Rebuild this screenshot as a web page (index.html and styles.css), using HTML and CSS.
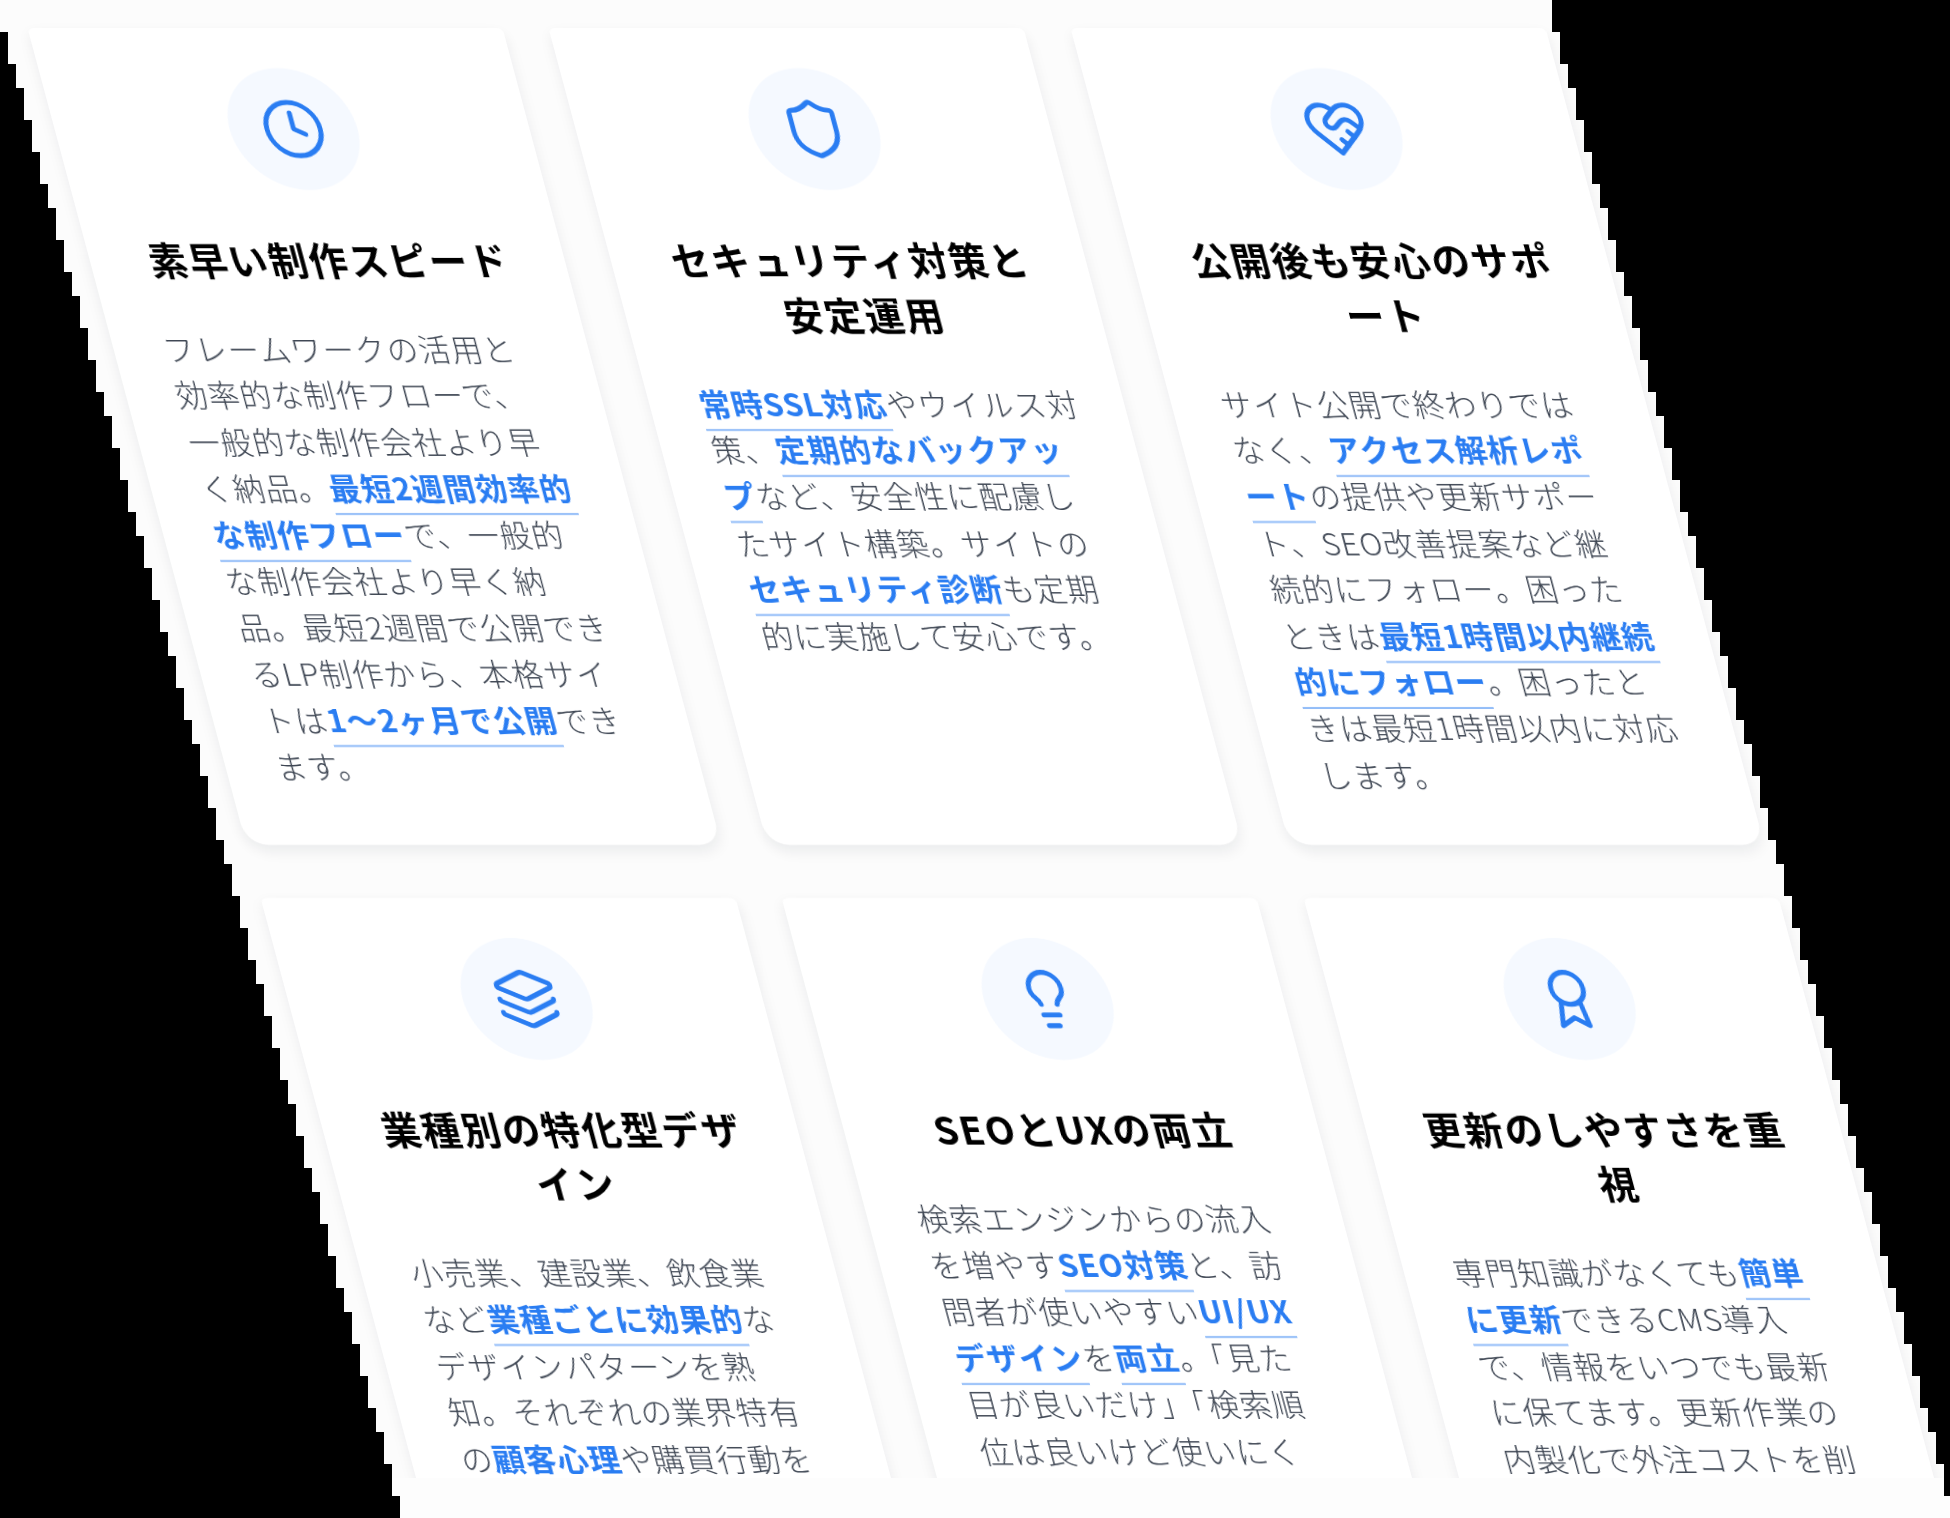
FILE: index.html
```html
<!DOCTYPE html>
<html lang="ja">
<head>
<meta charset="utf-8">
<title>特徴</title>
<link rel="stylesheet" href="styles.css">
</head>
<body>
<main class="stage">
<div class="viewport">
<section class="grid">
<article class="card">
<div class="badge"><svg class="icon" viewBox="0 0 24 24"><circle cx="12" cy="12" r="10"/><path d="M12 6v6l4 2"/></svg></div>
<h3 class="title">素早い制作スピード</h3>
<p class="body">フレームワークの活用と<br>効率的な制作フローで、<br>一般的な制作会社より早<br>く納品。<b class="mark">最短2週間効率的<br>な制作フロー</b>で、一般的<br>な制作会社より早く納<br>品。最短2週間で公開でき<br>るLP制作から、本格サイ<br>トは<b class="mark">1〜2ヶ月で公開</b>でき<br>ます。</p>
</article>
<article class="card">
<div class="badge"><svg class="icon" viewBox="0 0 24 24"><path d="M20 13c0 5-3.5 7.5-7.66 8.95a1 1 0 0 1-.67-.01C7.5 20.5 4 18 4 13V6a1 1 0 0 1 1-1c2 0 4.5-1.2 6.24-2.72a1.17 1.17 0 0 1 1.52 0C14.51 3.81 17 5 19 5a1 1 0 0 1 1 1z"/></svg></div>
<h3 class="title">セキュリティ対策と<br>安定運用</h3>
<p class="body"><b class="mark">常時SSL対応</b>やウイルス対<br>策、<b class="mark">定期的なバックアッ<br>プ</b>など、安全性に配慮し<br>たサイト構築。サイトの<br><b class="mark">セキュリティ診断</b>も定期<br>的に実施して安心です。</p>
</article>
<article class="card">
<div class="badge"><svg class="icon" viewBox="0 0 24 24"><path d="M19 14c1.49-1.46 3-3.21 3-5.5A5.5 5.5 0 0 0 16.5 3c-1.76 0-3 .5-4.5 2-1.5-1.5-2.74-2-4.5-2A5.5 5.5 0 0 0 2 8.5c0 2.3 1.5 4.05 3 5.5l7 7Z"/><path d="M12 5 9.04 7.96a2.17 2.17 0 0 0 0 3.08c.82.82 2.13.85 3 .07l2.07-1.9a2.82 2.82 0 0 1 3.79 0l2.96 2.66"/><path d="m18 15-2-2"/><path d="m15 18-2-2"/></svg></div>
<h3 class="title">公開後も安心のサポ<br>ート</h3>
<p class="body">サイト公開で終わりでは<br>なく、<b class="mark">アクセス解析レポ<br>ート</b>の提供や更新サポー<br>ト、SEO改善提案など継<br>続的にフォロー。困った<br>ときは<b class="mark">最短1時間以内継続<br>的にフォロー</b>。困ったと<br>きは最短1時間以内に対応<br>します。</p>
</article>
<article class="card">
<div class="badge"><svg class="icon" viewBox="0 0 24 24"><path d="M12.83 2.18a2 2 0 0 0-1.66 0L2.6 6.08a1 1 0 0 0 0 1.83l8.58 3.91a2 2 0 0 0 1.66 0l8.58-3.9a1 1 0 0 0 0-1.83z"/><path d="M2 12a1 1 0 0 0 .58.91l8.6 3.91a2 2 0 0 0 1.65 0l8.58-3.9A1 1 0 0 0 22 12"/><path d="M2 17a1 1 0 0 0 .58.91l8.6 3.91a2 2 0 0 0 1.65 0l8.58-3.9A1 1 0 0 0 22 17"/></svg></div>
<h3 class="title">業種別の特化型デザ<br>イン</h3>
<p class="body">小売業、建設業、飲食業<br>など<b class="mark">業種ごとに効果的</b>な<br>デザインパターンを熟<br>知。それぞれの業界特有<br>の<b class="mark">顧客心理</b>や購買行動を</p>
</article>
<article class="card">
<div class="badge"><svg class="icon" viewBox="0 0 24 24"><path d="M15 14c.2-1 .7-1.7 1.5-2.5 1-.9 1.5-2.2 1.5-3.5A6 6 0 0 0 6 8c0 1 .2 2.2 1.5 3.5.7.7 1.3 1.5 1.5 2.5"/><path d="M9 18h6"/><path d="M10 22h4"/></svg></div>
<h3 class="title">SEOとUXの両立</h3>
<p class="body">検索エンジンからの流入<br>を増やす<b class="mark">SEO対策</b>と、訪<br>問者が使いやすい<b class="mark">UI/UX<br>デザイン</b>を<b class="mark">両立</b>。「見た<br>目が良いだけ」「検索順<br>位は良いけど使いにく</p>
</article>
<article class="card">
<div class="badge"><svg class="icon" viewBox="0 0 24 24"><path d="M15.477 12.89 17 22l-5-3-5 3 1.523-9.11"/><circle cx="12" cy="8" r="6"/></svg></div>
<h3 class="title">更新のしやすさを重<br>視</h3>
<p class="body">専門知識がなくても<b class="mark">簡単<br>に更新</b>できるCMS導入<br>で、情報をいつでも最新<br>に保てます。更新作業の<br>内製化で外注コストを削</p>
</article>
</section>
</div>
</main>
</body>
</html>
```
FILE: styles.css
```css
* { box-sizing: border-box; }
html, body { margin: 0; height: 100%; background: #000; }
body { width: 1950px; height: 1518px; overflow: hidden; font-family: "Noto Sans CJK JP", "Noto Sans", sans-serif; }
.stage {
  width: 1950px;
  height: 1518px;
  background: #fdfdfd;
  clip-path: polygon(0 0,0 32px,8px 32px,8px 64px,16px 64px,16px 88px,24px 88px,24px 120px,32px 120px,32px 152px,40px 152px,40px 184px,48px 184px,48px 208px,56px 208px,56px 240px,64px 240px,64px 272px,72px 272px,72px 296px,80px 296px,80px 328px,88px 328px,88px 360px,96px 360px,96px 392px,104px 392px,104px 416px,112px 416px,112px 448px,120px 448px,120px 480px,128px 480px,128px 512px,136px 512px,136px 536px,144px 536px,144px 568px,152px 568px,152px 600px,160px 600px,160px 632px,168px 632px,168px 656px,176px 656px,176px 688px,184px 688px,184px 720px,192px 720px,192px 744px,200px 744px,200px 776px,208px 776px,208px 808px,216px 808px,216px 840px,224px 840px,224px 864px,232px 864px,232px 896px,240px 896px,240px 928px,248px 928px,248px 960px,256px 960px,256px 984px,264px 984px,264px 1016px,272px 1016px,272px 1048px,280px 1048px,280px 1080px,288px 1080px,288px 1104px,296px 1104px,296px 1136px,304px 1136px,304px 1168px,312px 1168px,312px 1192px,320px 1192px,320px 1224px,328px 1224px,328px 1256px,336px 1256px,336px 1288px,344px 1288px,344px 1312px,352px 1312px,352px 1344px,360px 1344px,360px 1376px,368px 1376px,368px 1408px,376px 1408px,376px 1432px,384px 1432px,384px 1464px,392px 1464px,392px 1496px,400px 1496px,400px 1518px,1952px 1518px,1952px 1496px,1944px 1496px,1944px 1464px,1936px 1464px,1936px 1432px,1928px 1432px,1928px 1408px,1920px 1408px,1920px 1376px,1912px 1376px,1912px 1344px,1904px 1344px,1904px 1312px,1896px 1312px,1896px 1288px,1888px 1288px,1888px 1256px,1880px 1256px,1880px 1224px,1872px 1224px,1872px 1192px,1864px 1192px,1864px 1168px,1856px 1168px,1856px 1136px,1848px 1136px,1848px 1104px,1840px 1104px,1840px 1080px,1832px 1080px,1832px 1048px,1824px 1048px,1824px 1016px,1816px 1016px,1816px 984px,1808px 984px,1808px 960px,1800px 960px,1800px 928px,1792px 928px,1792px 896px,1784px 896px,1784px 864px,1776px 864px,1776px 840px,1768px 840px,1768px 808px,1760px 808px,1760px 776px,1752px 776px,1752px 744px,1744px 744px,1744px 720px,1736px 720px,1736px 688px,1728px 688px,1728px 656px,1720px 656px,1720px 632px,1712px 632px,1712px 600px,1704px 600px,1704px 568px,1696px 568px,1696px 536px,1688px 536px,1688px 512px,1680px 512px,1680px 480px,1672px 480px,1672px 448px,1664px 448px,1664px 416px,1656px 416px,1656px 392px,1648px 392px,1648px 360px,1640px 360px,1640px 328px,1632px 328px,1632px 296px,1624px 296px,1624px 272px,1616px 272px,1616px 240px,1608px 240px,1608px 208px,1600px 208px,1600px 184px,1592px 184px,1592px 152px,1584px 152px,1584px 120px,1576px 120px,1576px 88px,1568px 88px,1568px 64px,1560px 64px,1560px 32px,1552px 32px,1552px 0);
}
.viewport {
  height: 1478px;
  overflow: hidden;
  background: #fcfcfc;
}
.grid {
  display: grid;
  grid-template-columns: repeat(3, 475px);
  grid-template-rows: 817px 817px;
  column-gap: 46.3px;
  row-gap: 52.5px;
  padding: 28px 0 0 20px;
  transform: skewX(15deg);
  transform-origin: 0 0;
  filter: blur(0.5px);
}
.card {
  background: #fff;
  border-radius: 6px 6px 22px 22px;
  padding: 40px 47px 47px 50px;
  box-shadow: 0 6px 14px rgba(15, 23, 42, 0.07);
  display: flex;
  flex-direction: column;
  align-items: stretch;
}
.badge {
  width: 128px;
  height: 122px;
  border-radius: 50%;
  background: #f5f9ff;
  align-self: center;
  margin-bottom: 42px;
  display: flex;
  align-items: center;
  justify-content: center;
}
.icon {
  width: 64px;
  height: 64px;
  fill: none;
  stroke: #2a7df2;
  stroke-width: 1.85;
  stroke-linecap: round;
  stroke-linejoin: round;
}
.title {
  margin: 0 -20px 38.5px;
  font-size: 38px;
  line-height: 54.5px;
  letter-spacing: 2px;
  font-weight: 700;
  color: #000;
  text-align: center;
  white-space: nowrap;
}
.body {
  margin: 0;
  font-size: 31px;
  line-height: 46.4px;
  letter-spacing: 1px;
  font-weight: 300;
  color: #3f4754;
  white-space: nowrap;
}
.mark {
  font-weight: 700;
  color: #2a7df2;
  letter-spacing: 0.9px;
  padding-bottom: 4px;
  border-bottom: 2px solid #93bdf8;
}
```
